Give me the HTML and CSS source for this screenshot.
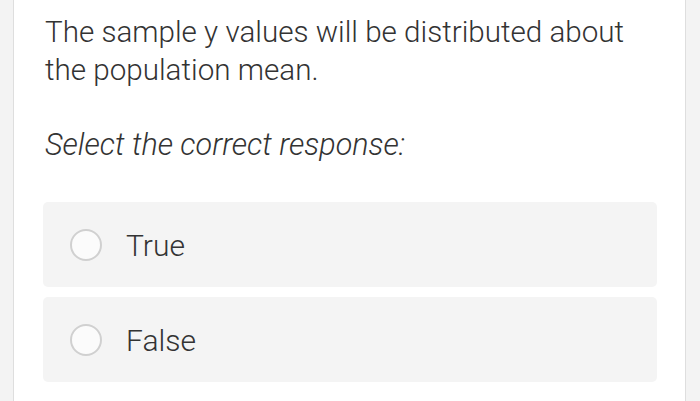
FILE: index.html
```html
<!DOCTYPE html>
<html>
<head>
<meta charset="utf-8">
<link rel="stylesheet" href="styles.css">
</head>
<body>
<div class="card">
  <p class="question">The sample y values will be distributed about the population mean.</p>
  <p class="prompt">Select the correct response:</p>
  <div class="options">
    <label class="option"><span class="radio"></span><span class="label">True</span></label>
    <label class="option"><span class="radio"></span><span class="label">False</span></label>
  </div>
</div>
</body>
</html>
```
FILE: styles.css
```css
html, body {
  margin: 0;
  padding: 0;
  background: #f3f3f3;
  height: 100%;
}
body {
  font-family: Roboto, "Liberation Sans", sans-serif;
  color: #333;
}
.card {
  margin-left: 13px;
  width: 673px;
  min-height: 100%;
  box-sizing: border-box;
  background: #fff;
  border-left: 1px solid #dedede;
  border-right: 1px solid #dedede;
  padding: 13px 28px 0 29px;
}
.question {
  margin: 0;
  font-size: 29.6px;
  font-weight: 300;
  line-height: 38px;
  padding-left: 2px;
}
.prompt {
  margin: 37px 0 0;
  font-size: 30.5px;
  font-weight: 300;
  font-style: italic;
  line-height: 38px;
  padding-left: 2px;
}
.options {
  margin-top: 38px;
  display: flex;
  flex-direction: column;
  gap: 10px;
}
.option {
  display: flex;
  align-items: center;
  height: 85px;
  background: #f4f4f4;
  border-radius: 5px;
  padding-left: 27px;
  box-sizing: border-box;
}
.radio {
  width: 32px;
  height: 32px;
  box-sizing: border-box;
  border-radius: 50%;
  border: 2px solid #d0d0d0;
  background: #fbfbfb;
  flex: none;
}
.label {
  margin-left: 24px;
  font-size: 30px;
  font-weight: 300;
  line-height: 38px;
  padding-top: 3px;
}
```
